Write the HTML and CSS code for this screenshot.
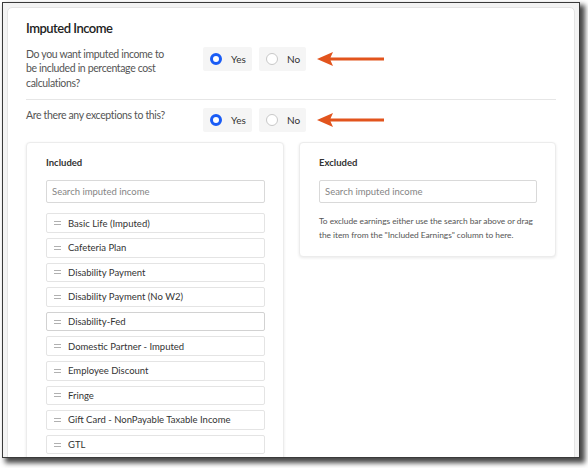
FILE: index.html
```html
<!DOCTYPE html>
<html>
<head>
<meta charset="utf-8">
<link rel="stylesheet" href="styles.css">
</head>
<body>
<div class="window">
  <div class="card">
    <h2 class="title">Imputed Income</h2>
    <div class="row">
      <div class="question">Do you want imputed income to<br>be included in percentage cost<br>calculations?</div>
      <div class="choices">
        <label class="choice choice-yes"><span class="radio on"></span>Yes</label>
        <label class="choice choice-no"><span class="radio"></span>No</label>
        <svg class="arrow" width="68" height="16" viewBox="0 0 68 16"><path d="M0 8 L16 1 L13.5 6.6 L67 6.6 L67 9.4 L13.5 9.4 L16 15 Z" fill="#e2541d"/></svg>
      </div>
    </div>
    <div class="divider"></div>
    <div class="row row-2">
      <div class="question">Are there any exceptions to this?</div>
      <div class="choices">
        <label class="choice choice-yes"><span class="radio on"></span>Yes</label>
        <label class="choice choice-no"><span class="radio"></span>No</label>
        <svg class="arrow" width="68" height="16" viewBox="0 0 68 16"><path d="M0 8 L16 1 L13.5 6.6 L67 6.6 L67 9.4 L13.5 9.4 L16 15 Z" fill="#e2541d"/></svg>
      </div>
    </div>
    <div class="panels">
      <div class="panel">
        <div class="panel-label">Included</div>
        <div class="search">Search imputed income</div>
        <ul class="items">
          <li class="item"><span class="handle"></span>Basic Life (Imputed)</li>
          <li class="item"><span class="handle"></span>Cafeteria Plan</li>
          <li class="item"><span class="handle"></span>Disability Payment</li>
          <li class="item"><span class="handle"></span>Disability Payment (No W2)</li>
          <li class="item item-hover"><span class="handle"></span>Disability-Fed</li>
          <li class="item"><span class="handle"></span>Domestic Partner - Imputed</li>
          <li class="item"><span class="handle"></span>Employee Discount</li>
          <li class="item"><span class="handle"></span>Fringe</li>
          <li class="item"><span class="handle"></span>Gift Card - NonPayable Taxable Income</li>
          <li class="item"><span class="handle"></span>GTL</li>
        </ul>
      </div>
      <div class="panel panel-excluded">
        <div class="panel-label">Excluded</div>
        <div class="search">Search imputed income</div>
        <p class="help">To exclude earnings either use the search bar above or drag the item from the "Included Earnings" column to here.</p>
      </div>
    </div>
  </div>
</div>
</body>
</html>
```
FILE: styles.css
```css
* { box-sizing: border-box; }
html, body { margin: 0; padding: 0; background: #ffffff; }
body {
  font-family: "Lato", "Liberation Sans", sans-serif;
  width: 588px;
  height: 468px;
  overflow: hidden;
}
.window {
  margin: 2px 0 0 2px;
  width: 578px;
  height: 456px;
  border: 1px solid #3a3a3a;
  background: #f3f3f3;
  box-shadow: 4px 4px 5px 1px rgba(0, 0, 0, 0.72);
  overflow: hidden;
  padding: 4px;
}
.card {
  background: #ffffff;
  border: 1px solid #e4e4e4;
  border-radius: 5px;
  padding: 12px 18px 0 18px;
  height: 520px;
}
.title {
  margin: 0;
  font-size: 13px;
  line-height: 16px;
  font-weight: 600;
  letter-spacing: -0.5px;
  color: #222;
}
.row {
  display: flex;
  align-items: flex-start;
  margin-top: 11px;
  padding-bottom: 9px;
}
.row-2 { margin-top: 8.5px; padding-bottom: 0; }
.question {
  width: 177px;
  flex: none;
  font-size: 10.5px;
  line-height: 14.3px;
  letter-spacing: -0.35px;
  color: #555;
  white-space: nowrap;
}
.choices {
  display: flex;
  align-items: center;
}
.choice {
  display: flex;
  align-items: center;
  height: 24px;
  background: #f5f5f5;
  border-radius: 2px;
  padding: 0 6px 0 7px;
  font-size: 10px;
  color: #333;
}
.choice-yes { width: 49px; }
.choice-no { width: 47px; margin-left: 7px; }
.radio {
  width: 12px;
  height: 12px;
  border-radius: 50%;
  border: 1px solid #c8c8c8;
  background: #fff;
  margin-right: 9px;
  flex: none;
}
.radio.on {
  border: 3.5px solid #1a5cf5;
}
.arrow { margin-left: 11px; display: block; }
.divider {
  height: 1px;
  background: #e6e6e6;
}
.panels {
  display: grid;
  grid-template-columns: 258px 257px;
  column-gap: 15px;
  margin-top: 10px;
  align-items: start;
}
.panel {
  background: #fff;
  border: 1px solid #ececec;
  border-radius: 4px;
  box-shadow: 0 1px 3px rgba(0, 0, 0, 0.09);
  padding: 13px 18px 15px 19px;
}
.panel-excluded { padding-bottom: 14px; }
.panel-label {
  font-size: 9.5px;
  line-height: 14px;
  font-weight: 700;
  color: #333;
}
.search {
  margin-top: 10px;
  height: 23px;
  border: 1px solid #d9d9d9;
  border-radius: 2px;
  padding-left: 5px;
  display: flex;
  align-items: center;
  font-size: 9.5px;
  color: #858585;
}
.items {
  list-style: none;
  margin: 10px 0 0 0;
  padding: 0;
  display: flex;
  flex-direction: column;
  gap: 5px;
}
.item {
  height: 19.6px;
  border: 1px solid #e4e4e4;
  border-radius: 2px;
  display: flex;
  align-items: center;
  padding-left: 7px;
  font-size: 9.5px;
  color: #333;
}
.item-hover { border-color: #d2d2d2; }
.handle {
  width: 7px;
  height: 4px;
  border-top: 1px solid #b0b0b0;
  border-bottom: 1px solid #b0b0b0;
  margin-right: 7px;
  flex: none;
}
.help {
  margin: 11px -2px 0 0;
  font-size: 8.4px;
  line-height: 14px;
  letter-spacing: -0.05px;
  color: #555;
}
```
